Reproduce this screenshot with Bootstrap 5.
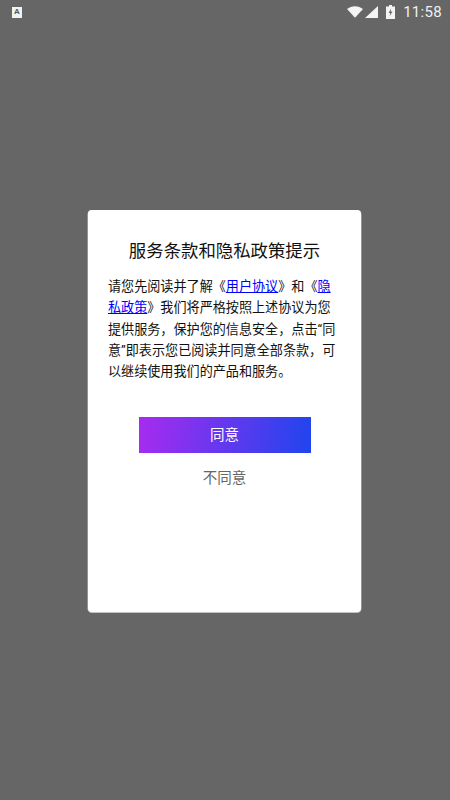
<!DOCTYPE html>
<html lang="zh">
<head>
<meta charset="utf-8">
<title>服务条款和隐私政策提示</title>
<link href="https://cdn.jsdelivr.net/npm/bootstrap@5.3.0/dist/css/bootstrap.min.css" rel="stylesheet">
<style>
html,body{height:800px;overflow:hidden}
body{background:#666;font-family:Roboto,"Noto Sans CJK SC",sans-serif}
.statusbar{height:24px;padding:0 8px 0 12px;color:#f0f0f0}
.app-badge{width:10px;height:11px;background:#f2f2f2;color:#555;font:700 8px/10px "Liberation Sans",sans-serif;text-align:center}
.clock{font:400 15px/24px Roboto,sans-serif;letter-spacing:.3px;margin-left:8px}
.wifi-icon{margin-right:0}
.cell-icon{margin-left:2px}
.batt-icon{margin-left:8px}
.stage{height:776px;padding-top:186px;padding-left:88px}
.dialog-box{width:273px;height:402px;background:#fff;border-radius:4px;padding:29px 20px 0 20px;box-shadow:0 .5px 0 .5px rgba(220,220,220,.8)}
.dialog-title{font-size:17.400px;line-height:24px;font-weight:400;color:#111;text-align:center;margin:0 0 13px}
.dialog-body{font-size:13.100px;line-height:21.300px;color:#111;margin:0}
.dialog-body a{color:#00f}
.agree-btn{width:172px;height:36px;margin:35px auto 0;display:block;border:0;border-radius:0;background:linear-gradient(100deg,#a82bef,#1f45ee);color:#fff;font-size:14.500px;line-height:37px;padding:0}
.refuse-btn{display:block;width:172px;margin:8px auto 0;border:0;background:none;color:#666;font-size:14.500px;line-height:36px;padding:0}
</style>
</head>
<body>
<div class="statusbar d-flex align-items-center">
  <div class="app-badge">A</div>
  <div class="ms-auto d-flex align-items-center">
    <svg width="16" height="12" viewBox="0 0 18 13" class="wifi-icon"><path d="M0 3.200C2.500 1.200 5.600 0 9 0s6.500 1.200 9 3.200L9 13z" fill="#f4f4f4"/></svg>
    <svg width="13" height="12" viewBox="0 0 13 12" class="cell-icon"><path d="M13 0v12H0z" fill="#f4f4f4"/></svg>
    <svg width="9" height="14" viewBox="0 0 9 14" class="batt-icon"><path d="M3 0h3v1.500h3V14H0V1.500h3z" fill="#f4f4f4"/><path d="M5.200 3.500 2.600 8h1.700l-.6 3.200L6.500 6.600H4.700z" fill="#666"/></svg>
    <span class="clock">11:58</span>
  </div>
</div>
<div class="stage">
  <div class="dialog-box">
    <h1 class="dialog-title">服务条款和隐私政策提示</h1>
    <p class="dialog-body">请您先阅读并了解《<a href="#">用户协议</a>》和《<a href="#">隐私政策</a>》我们将严格按照上述协议为您提供服务，保护您的信息安全，点击“同意”即表示您已阅读并同意全部条款，可以继续使用我们的产品和服务。</p>
    <button type="button" class="btn agree-btn">同意</button>
    <button type="button" class="btn refuse-btn">不同意</button>
  </div>
</div>
</body>
</html>
